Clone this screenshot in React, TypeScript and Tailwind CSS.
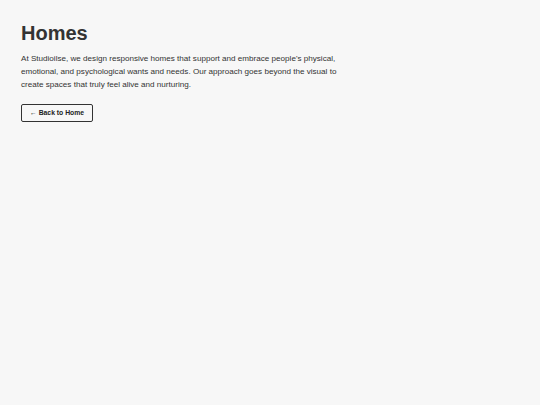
import React from 'react';

export default function App() {
  return (
    <div className="min-h-screen bg-[#f7f7f7] font-['Liberation_Sans',Arial,sans-serif] text-[#333]">
      <main className="px-[21px] pt-[19px]">
        <h1 className="text-[20px] font-bold leading-[28px] text-[#333]">Homes</h1>
        <p className="mt-[5px] max-w-[330px] text-[8.1px] leading-[13px] text-[#333]">
          At Studioilse, we design responsive homes that support and embrace people's physical, emotional, and psychological wants and needs. Our approach goes beyond the visual to create spaces that truly feel alive and nurturing.
        </p>
        <a
          href="#"
          className="mt-[13px] inline-flex h-[18px] items-center rounded-[2px] border border-[#333] px-[8px] text-[6.8px] font-bold text-[#222]"
        >
          ← Back to Home
        </a>
      </main>
    </div>
  );
}
